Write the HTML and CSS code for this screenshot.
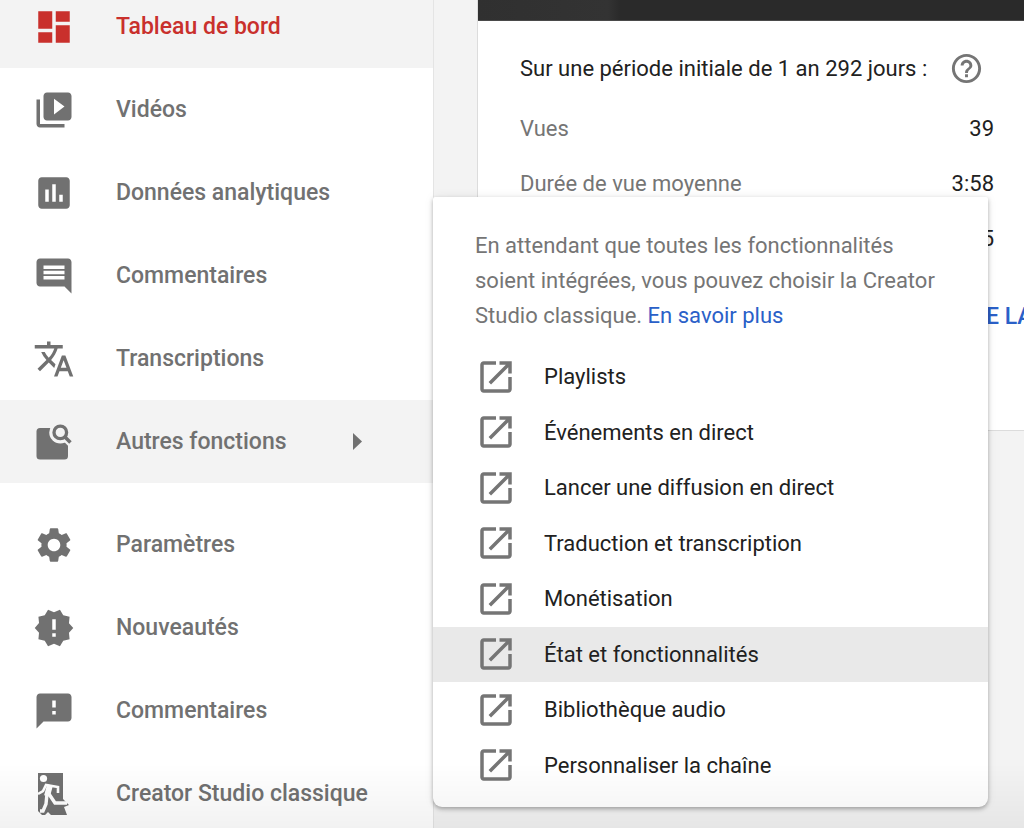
FILE: index.html
```
<!DOCTYPE html>
<!-- Creator dashboard: side navigation with the "Autres fonctions" menu open over the latest video card -->
<html lang="fr">
  <head>
    <meta charset="utf-8" />
    <meta name="viewport" content="width=device-width, initial-scale=1" />
    <link rel="stylesheet" href="styles.css">
    <title>Tableau de bord</title>
  </head>
  <body>
    <svg class="sprite">
      <symbol id="open" viewBox="0 0 24 24">
        <path d="M19 19H5V5h7V3H5c-1.11 0-2 .9-2 2v14c0 1.1.89 2 2 2h14c1.1 0 2-.9 2-2v-7h-2v7zM14 3v2h3.59l-9.83 9.83 1.41 1.41L19 6.41V10h2V3h-7z" />
      </symbol>
    </svg>

    <div class="page">
      <nav class="sidebar">
        <ul class="nav-list">
          <li>
            <a href="#" class="nav-link selected">
              <svg class="icon" viewBox="0 0 24 24"><path d="M3 13h8V3H3v10zm0 8h8v-6H3v6zm10 0h8V11h-8v10zm0-18v6h8V3h-8z" /></svg>
              Tableau de bord
            </a>
          </li>
          <li>
            <a href="#" class="nav-link">
              <svg class="icon" viewBox="0 0 24 24"><path d="M4 6H2v14c0 1.1.9 2 2 2h14v-2H4V6zm16-4H8c-1.1 0-2 .9-2 2v12c0 1.1.9 2 2 2h12c1.1 0 2-.9 2-2V4c0-1.1-.9-2-2-2zm-8 12.5v-9l6 4.5-6 4.5z" /></svg>
              Vidéos
            </a>
          </li>
          <li>
            <a href="#" class="nav-link">
              <svg class="icon" viewBox="0 0 24 24"><path d="M19 3H5c-1.1 0-2 .9-2 2v14c0 1.1.9 2 2 2h14c1.1 0 2-.9 2-2V5c0-1.1-.9-2-2-2zM9 17H7v-7h2v7zm4 0h-2V7h2v10zm4 0h-2v-4h2v4z" /></svg>
              Données analytiques
            </a>
          </li>
          <li>
            <a href="#" class="nav-link">
              <svg class="icon" viewBox="0 0 24 24"><path d="M21.99 4c0-1.1-.89-2-1.99-2H4c-1.1 0-2 .9-2 2v12c0 1.1.9 2 2 2h14l4 4-.01-18zM18 14H6v-2h12v2zm0-3H6V9h12v2zm0-3H6V6h12v2z" /></svg>
              Commentaires
            </a>
          </li>
          <li>
            <a href="#" class="nav-link">
              <svg class="icon" viewBox="0 0 24 24"><path d="M12.87 15.07l-2.54-2.51.03-.03c1.74-1.94 2.98-4.17 3.71-6.53H17V4h-7V2H8v2H1v1.99h11.17C11.5 7.92 10.44 9.75 9 11.35 8.07 10.32 7.3 9.19 6.69 8h-2c.73 1.63 1.73 3.17 2.98 4.56l-5.09 5.02L4 19l5-5 3.11 3.11.76-2.04zM18.5 10h-2L12 22h2l1.12-3h4.75L21 22h2l-4.5-12zm-2.62 7l1.62-4.33L19.12 17h-3.24z" /></svg>
              Transcriptions
            </a>
          </li>
          <li class="more">
            <button type="button" class="nav-link more-button" aria-expanded="true">
              <svg class="icon" viewBox="0 0 24 24">
                <mask id="lens">
                  <rect width="24" height="24" fill="#fff" />
                  <circle cx="15.6" cy="6.5" r="6.3" fill="#000" />
                  <path d="M17 8l6 6" stroke="#000" stroke-width="4.4" />
                </mask>
                <rect x="2" y="4" width="18" height="18" rx="2" mask="url(#lens)" />
                <circle cx="15.6" cy="6.5" r="3.6" fill="none" stroke="currentColor" stroke-width="1.9" />
                <path d="M18.1 9l3.3 3.3" stroke="currentColor" stroke-width="2" />
              </svg>
              Autres fonctions
              <svg class="arrow" viewBox="0 0 9 17"><path d="M0 0l9 8.5L0 17z" /></svg>
            </button>

            <div class="menu">
              <p class="menu-text">
                En attendant que toutes les fonctionnalités soient intégrées, vous
                pouvez choisir la Creator Studio classique.
                <a href="#">En savoir plus</a>
              </p>
              <ul class="menu-list">
                <li><a href="#" class="menu-link"><svg class="icon"><use href="#open" /></svg>Playlists</a></li>
                <li><a href="#" class="menu-link"><svg class="icon"><use href="#open" /></svg>Événements en direct</a></li>
                <li><a href="#" class="menu-link"><svg class="icon"><use href="#open" /></svg>Lancer une diffusion en direct</a></li>
                <li><a href="#" class="menu-link"><svg class="icon"><use href="#open" /></svg>Traduction et transcription</a></li>
                <li><a href="#" class="menu-link"><svg class="icon"><use href="#open" /></svg>Monétisation</a></li>
                <li><a href="#" class="menu-link active"><svg class="icon"><use href="#open" /></svg>État et fonctionnalités</a></li>
                <li><a href="#" class="menu-link"><svg class="icon"><use href="#open" /></svg>Bibliothèque audio</a></li>
                <li><a href="#" class="menu-link"><svg class="icon"><use href="#open" /></svg>Personnaliser la chaîne</a></li>
              </ul>
            </div>
          </li>
        </ul>

        <ul class="nav-list">
          <li>
            <a href="#" class="nav-link">
              <svg class="icon" viewBox="0 0 24 24"><path d="M19.14 12.94c.04-.3.06-.61.06-.94 0-.32-.02-.64-.07-.94l2.03-1.58c.18-.14.23-.41.12-.61l-1.92-3.32c-.12-.22-.37-.29-.59-.22l-2.39.96c-.5-.38-1.03-.7-1.62-.94l-.36-2.54c-.04-.24-.24-.41-.48-.41h-3.84c-.24 0-.43.17-.47.41l-.36 2.54c-.59.24-1.13.57-1.62.94l-2.39-.96c-.22-.08-.47 0-.59.22L2.74 8.87c-.12.21-.08.47.12.61l2.03 1.58c-.05.3-.09.63-.09.94s.02.64.07.94l-2.03 1.58c-.18.14-.23.41-.12.61l1.92 3.32c.12.22.37.29.59.22l2.39-.96c.5.38 1.03.7 1.62.94l.36 2.54c.05.24.24.41.48.41h3.84c.24 0 .44-.17.47-.41l.36-2.54c.59-.24 1.13-.56 1.62-.94l2.39.96c.22.08.47 0 .59-.22l1.92-3.32c.12-.22.07-.47-.12-.61l-2.01-1.58zM12 15.6c-1.98 0-3.6-1.62-3.6-3.6s1.62-3.6 3.6-3.6 3.6 1.62 3.6 3.6-1.62 3.6-3.6 3.6z" /></svg>
              Paramètres
            </a>
          </li>
          <li>
            <a href="#" class="nav-link">
              <svg class="icon" viewBox="0 0 24 24"><path d="M23 12l-2.44-2.78.34-3.68-3.61-.82-1.89-3.18L12 3 8.6 1.54 6.71 4.72l-3.61.81.34 3.68L1 12l2.44 2.78-.34 3.69 3.61.82 1.89 3.18L12 21l3.4 1.46 1.89-3.18 3.61-.82-.34-3.68L23 12zm-10 5h-2v-2h2v2zm0-4h-2V7h2v6z" /></svg>
              Nouveautés
            </a>
          </li>
          <li>
            <a href="#" class="nav-link">
              <svg class="icon" viewBox="0 0 24 24"><path d="M20 2H4c-1.1 0-1.99.9-1.99 2L2 22l4-4h14c1.1 0 2-.9 2-2V4c0-1.1-.9-2-2-2zm-7 12h-2v-2h2v2zm0-4h-2V6h2v4z" /></svg>
              Commentaires
            </a>
          </li>
          <li>
            <a href="#" class="nav-link">
              <svg class="icon" viewBox="0 0 42 42">
                <path d="M5 0h25v26l6 6-5 2 3 8H18l-3-3-3 3H9l-4-4z" />
                <g fill="none" stroke="#fff">
                  <path d="M5 21l5-3 3-6 12 2v6" stroke-width="2.6" />
                  <path d="M17 12l-3 11" stroke-width="6" />
                  <path d="M14 21l-1 10-3 7h-3" stroke-width="3.4" />
                  <path d="M16 21l6 9h12" stroke-width="3.4" />
                </g>
                <circle cx="10.5" cy="5.5" r="3.6" fill="#fff" />
              </svg>
              Creator Studio classique
            </a>
          </li>
        </ul>
      </nav>

      <main class="content">
        <section class="card">
          <div class="thumbnail"></div>
          <div class="card-body">
            <h2 class="period">
              Sur une période initiale de 1 an 292 jours :
              <button type="button" class="help" aria-label="Aide">
                <svg viewBox="0 0 24 24"><path d="M11 18h2v-2h-2v2zm1-16C6.48 2 2 6.48 2 12s4.48 10 10 10 10-4.48 10-10S17.52 2 12 2zm0 18c-4.41 0-8-3.59-8-8s3.59-8 8-8 8 3.59 8 8-3.59 8-8 8zm0-14c-2.21 0-4 1.79-4 4h2c0-1.1.9-2 2-2s2 .9 2 2c0 2-3 1.75-3 5h2c0-2.25 3-2.5 3-5 0-2.21-1.79-4-4-4z" /></svg>
              </button>
            </h2>
            <dl class="stats">
              <div class="stat"><dt>Vues</dt><dd>39</dd></div>
              <div class="stat"><dt>Durée de vue moyenne</dt><dd>3:58</dd></div>
              <div class="stat"><dt></dt><dd>5</dd></div>
            </dl>
            <a href="#" class="card-link">E LA VIDÉO</a>
          </div>
        </section>
      </main>
    </div>
    <div class="fade"></div>
  </body>
</html>
```
FILE: styles.css
```
* {
  box-sizing: border-box;
}

body {
  margin: 0;
  overflow: hidden;
  background-color: #f3f3f3;
  color: #212121;
  font-family: Roboto, sans-serif;
  font-size: 22px;
}

a {
  color: #2a60c8;
  text-decoration: none;
}

ul,
dl,
dd,
p,
h2 {
  margin: 0;
  padding: 0;
  list-style: none;
}

svg {
  display: block;
  fill: currentColor;
}

.sprite {
  display: none;
}

.page {
  display: flex;
  height: 100vh;
}

/* Side navigation, scrolled a little past its first row */
.sidebar {
  flex: 0 0 434px;
  margin-top: -15px;
  background-color: #fff;
  border-right: 1px solid #e4e4e4;
}

.nav-list + .nav-list {
  margin-top: 20px;
}

.nav-link {
  display: flex;
  align-items: center;
  gap: 41px;
  width: 100%;
  height: 83px;
  padding: 0 33px;
  color: #717171;
  font-family: Roboto, sans-serif;
  font-size: 23px;
  font-weight: 500;
}

.nav-link.selected {
  background-color: #f3f3f3;
  color: #c9302c;
}

.icon {
  flex: none;
  width: 42px;
  height: 42px;
}

.more {
  position: relative;
}

.more-button {
  border: none;
  background-color: #f3f3f3;
  text-align: left;
}

.arrow {
  width: 9px;
  height: 17px;
  margin-left: auto;
  margin-right: 38px;
}

/* Menu that opens beside "Autres fonctions" */
.menu {
  position: absolute;
  left: 100%;
  bottom: -324px;
  z-index: 1;
  width: 555px;
  padding: 31px 0 14px;
  background-color: #fff;
  border-radius: 2px 2px 9px 9px;
  box-shadow: 0 2px 4px rgba(0, 0, 0, 0.3), 0 0 12px rgba(0, 0, 0, 0.06);
}

.menu-text {
  padding: 0 42px;
  margin-bottom: 16px;
  color: #757575;
  line-height: 35px;
}

.menu-list {
  display: grid;
  grid-auto-rows: 1fr;
  min-height: 444px;
}

.menu-link {
  display: flex;
  align-items: center;
  gap: 27px;
  height: 100%;
  padding: 0 42px;
  color: #212121;
}

.menu-link.active {
  background-color: #e9e9e9;
}

.menu-link .icon {
  color: #757575;
}

/* Latest video card, runs off the right side */
.content {
  flex: 1;
  min-width: 0;
  padding-left: 43px;
}

.card {
  margin-right: -12px;
  background-color: #fff;
  border: 1px solid #dcdcdc;
  border-top: none;
}

.thumbnail {
  height: 21px;
  background: linear-gradient(90deg, #303030 0, #333 130px, #2a2a2a 142px);
  border-bottom: 1px solid #4a4a4a;
}

.card-body {
  padding: 30px 41px 98px 42px;
}

.period {
  display: flex;
  align-items: center;
  gap: 22px;
  height: 35px;
  font-size: 22px;
  font-weight: 400;
  white-space: nowrap;
}

.help {
  padding: 0;
  border: none;
  background: none;
  color: #757575;
}

.help svg {
  width: 35px;
  height: 35px;
}

.stats {
  margin-top: 15px;
}

.stat {
  display: flex;
  align-items: center;
  justify-content: space-between;
  height: 55px;
}

.stat dt {
  color: #757575;
}

.card-link {
  display: block;
  margin-top: 36px;
  margin-left: 466px;
  line-height: 30px;
  font-size: 23px;
  font-weight: 500;
  white-space: nowrap;
}

/* Soft shade along the bottom of the window */
.fade {
  position: fixed;
  left: 0;
  right: 0;
  bottom: 0;
  z-index: 2;
  height: 64px;
  background: linear-gradient(rgba(0, 0, 0, 0), rgba(0, 0, 0, 0.05));
  pointer-events: none;
}
```
